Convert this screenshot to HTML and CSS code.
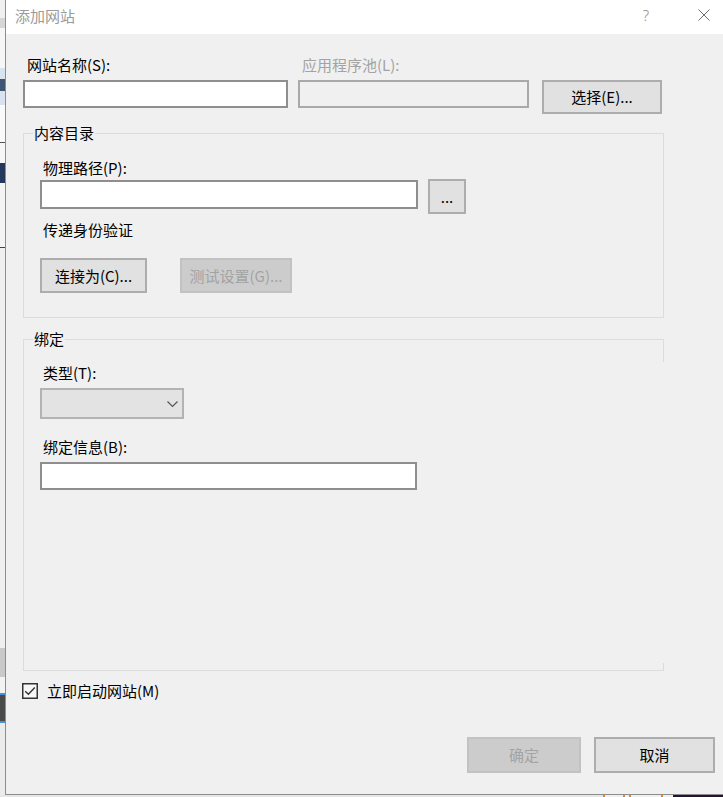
FILE: index.html
```html
<!DOCTYPE html>
<html lang="zh-CN">
<head>
<meta charset="utf-8">
<title>添加网站</title>
<link rel="stylesheet" href="styles.css">
</head>
<body>
<div class="screen">
  <div class="bgstrip">
    <div class="s s1"></div>
    <div class="s s2"></div>
    <div class="s s3"></div>
    <div class="s s4"></div>
    <div class="s s5"></div>
    <div class="s s4b"></div>
    <div class="s s6"></div>
    <div class="s s7"></div>
    <div class="s s8"></div>
    <div class="s s9"></div>
    <div class="s s10"></div>
    <div class="s s11"></div>
    <div class="s s12"></div>
    <div class="s s13"></div>
    <div class="s s14"></div>
    <div class="s s15"></div>
    <div class="s s16"></div>
  </div>
  <div class="dialog">
    <div class="titlebar">
      <span class="title">添加网站</span>
      <span class="spacer"></span>
      <span class="help">?</span>
      <svg class="close" width="12" height="12" viewBox="0 0 12 12"><path d="M0.5 0.5 L11.5 11.5 M11.5 0.5 L0.5 11.5" stroke="#6f6f6f" stroke-width="1" fill="none"/></svg>
    </div>
    <div class="content">
      <div class="toprow">
        <div class="label">网站名称(S):</div>
        <div class="label disabled-text">应用程序池(L):</div>
        <div></div>
        <input class="textbox" type="text">
        <div class="textbox readonly"></div>
        <button class="btn select-btn">选择(E)...</button>
      </div>

      <div class="group group-content">
        <span class="group-title">内容目录</span>
        <div class="sublabel">物理路径(P):</div>
        <div class="pathrow">
          <input class="textbox path" type="text">
          <button class="btn browse">...</button>
        </div>
        <div class="sublabel auth">传递身份验证</div>
        <div class="btnrow">
          <button class="btn connect">连接为(C)...</button>
          <button class="btn test disabled">测试设置(G)...</button>
        </div>
      </div>

      <div class="group group-binding">
        <span class="group-title">绑定</span>
        <div class="sublabel">类型(T):</div>
        <div class="combo">
          <svg width="11" height="7" viewBox="0 0 11 7"><path d="M0.5 0.5 L5.5 5.5 L10.5 0.5" stroke="#555" stroke-width="1.2" fill="none"/></svg>
        </div>
        <div class="sublabel bindlabel">绑定信息(B):</div>
        <input class="textbox bindinfo" type="text">
      </div>

      <div class="checkrow">
        <svg class="check" width="16" height="16" viewBox="0 0 16 16"><rect x="0.75" y="0.75" width="14.5" height="14.5" fill="#f7f7f7" stroke="#333" stroke-width="1.5"/><path d="M3.2 8.2 L6.4 11.3 L12.8 4.6" stroke="#333" stroke-width="1.4" fill="none"/></svg>
        <span class="checklabel">立即启动网站(M)</span>
      </div>

      <div class="footer">
        <button class="btn ok disabled">确定</button>
        <button class="btn cancel">取消</button>
      </div>
    </div>
  </div>
</div>
<div class="bottomstrip">
  <div class="b b1"></div>
  <div class="b tick"></div>
  <div class="b b2"></div>
  <div class="b tick"></div>
  <div class="b b3"></div>
  <div class="b tick"></div>
  <div class="b b4"></div>
  <div class="b tick"></div>
  <div class="b b5"></div>
  <div class="b dark"></div>
</div>
</body>
</html>
```

FILE: styles.css
```css
* { box-sizing: border-box; }

body {
  margin: 0;
  background: #f0f0f0;
  font-family: "Noto Sans CJK SC", "Noto Sans", sans-serif;
  font-size: 15px;
  color: #000;
  overflow: hidden;
}

.screen {
  display: flex;
  height: 795px;
}

/* background window peeking out on the left */
.bgstrip {
  width: 5px;
  display: flex;
  flex-direction: column;
}
.s { width: 5px; }
.s1 { height: 18px; background: #f0f0f0; }
.s2 { height: 10px; background: #d6d6d6; }
.s3 { height: 40px; background: #f6f6f6; }
.s4 { height: 11px; background: #d7e4f0; }
.s5 { height: 12px; background: #3f5573; }
.s4b { height: 14px; background: #d7e4f0; }
.s6 { height: 37px; background: #fafafa; }
.s7 { height: 1px; background: #555; }
.s8 { height: 20px; background: #f7f7f7; }
.s9 { height: 20px; background: #23385a; }
.s10 { height: 64px; background: #f4f4f4; }
.s11 { height: 1px; background: #444; }
.s12 { height: 400px; background: #f0f0f0; }
.s13 { height: 29px; background: #c9c9c9; }
.s14 { height: 16px; background: #f3f3f3; }
.s15 { height: 30px; background: #4a4a4a; border-top: 2px solid #4a90d9; border-bottom: 2px solid #4a90d9; }
.s16 { flex: 1; background: #ececec; }

.dialog {
  width: 718px;
  height: 795px;
  border-left: 1px solid #8d8d8d;
  border-bottom: 1px solid #8d8d8d;
  background: #f0f0f0;
  display: flex;
  flex-direction: column;
}

.titlebar {
  height: 34px;
  background: #fff;
  display: flex;
  align-items: center;
  padding-left: 9px;
  padding-right: 13px;
}
.title {
  color: #9b9b9b;
  font-size: 15px;
  line-height: 20px;
  margin-top: -3px;
}
.spacer { flex: 1; }
.help {
  width: 12px;
  text-align: center;
  color: #8a8a8a;
  font-family: "Noto Sans", sans-serif;
  font-weight: 300;
  font-size: 15px;
  line-height: 20px;
  margin-top: -4px;
  margin-right: 46px;
}
.close { display: block; margin-top: -4px; }

.content {
  padding: 21px 8px 0 17px;
}

.toprow {
  display: grid;
  grid-template-columns: 265px 231px 120px;
  grid-template-rows: 20px auto;
  column-gap: 10px;
  row-gap: 5px;
  align-items: start;
}
.label {
  line-height: 20px;
  padding-left: 4px;
  white-space: nowrap;
}
.disabled-text { color: #a3a3a3; }

.textbox {
  display: block;
  height: 28px;
  border: 2px solid #8e8e8e;
  background: #fff;
  margin: 0;
  padding: 0 4px;
  font: inherit;
  outline: none;
}
.textbox.readonly {
  background: #f0f0f0;
  border-color: #a9a9a9;
}

.btn {
  display: block;
  margin: 0;
  padding: 0;
  border: 2px solid #adadad;
  background: #e1e1e1;
  color: #000;
  font: inherit;
  font-size: 15px;
  line-height: 20px;
  text-align: center;
}
.btn.disabled {
  background: #cccccc;
  border-color: #c2c2c2;
  color: #a3a3a3;
}
.select-btn {
  width: 120px;
  height: 34px;
  margin-left: 3px;
}

.group {
  position: relative;
  width: 641px;
  border: 1px solid #dcdcdc;
}
.group-title {
  position: absolute;
  left: 9px;
  top: -11px;
  line-height: 20px;
  padding: 0 1px;
  background: #f0f0f0;
}
.sublabel {
  line-height: 20px;
  padding-left: 3px;
}

.group-content {
  margin-top: 19px;
  padding: 24px 0 24px 16px;
}
.pathrow {
  display: flex;
  align-items: flex-start;
  gap: 10px;
  margin-top: 2px;
}
.path { width: 378px; height: 29px; }
.browse {
  width: 38px;
  height: 35px;
  margin-top: -1px;
  line-height: 26px;
}
.auth { margin-top: 6px; }
.btnrow {
  display: flex;
  gap: 33px;
  margin-top: 18px;
}
.connect { width: 107px; height: 35px; }
.test { width: 112px; height: 35px; }

.group-binding {
  margin-top: 21px;
  padding: 23px 0 180px 16px;
  border-right: 0;
}
.group-binding::before,
.group-binding::after {
  content: "";
  position: absolute;
  right: 0;
  width: 1px;
  background: #dcdcdc;
}
.group-binding::before { top: 0; height: 22px; }
.group-binding::after { bottom: 0; height: 7px; }

.combo {
  width: 144px;
  height: 31px;
  margin-top: 5px;
  border: 2px solid #b3b3b3;
  background: #e3e3e3;
  display: flex;
  align-items: center;
  justify-content: flex-end;
  padding-right: 4px;
}
.combo svg { display: block; margin-top: 1px; }
.bindlabel { margin-top: 18px; }
.bindinfo { width: 377px; margin-top: 5px; }

.checkrow {
  display: flex;
  align-items: center;
  gap: 9px;
  height: 20px;
  margin-top: 10px;
  margin-left: -1px;
}
.check { display: block; }
.checklabel { line-height: 20px; }

.footer {
  display: flex;
  justify-content: flex-end;
  gap: 13px;
  margin-top: 36px;
}
.ok { width: 114px; height: 36px; }
.cancel { width: 121px; height: 36px; }

.bottomstrip {
  display: flex;
  height: 2px;
}
.b { height: 2px; }
.b1 { width: 603px; background: #e6e6e6; }
.b2 { width: 18px; background: #f0f0f0; }
.b3 { width: 4px; background: #f0f0f0; }
.b4 { width: 30px; background: #f0f0f0; }
.b5 { width: 10px; background: #f0f0f0; }
.tick { width: 2px; background: #e08a1e; }
.dark { flex: 1; background: #231437; }
```
